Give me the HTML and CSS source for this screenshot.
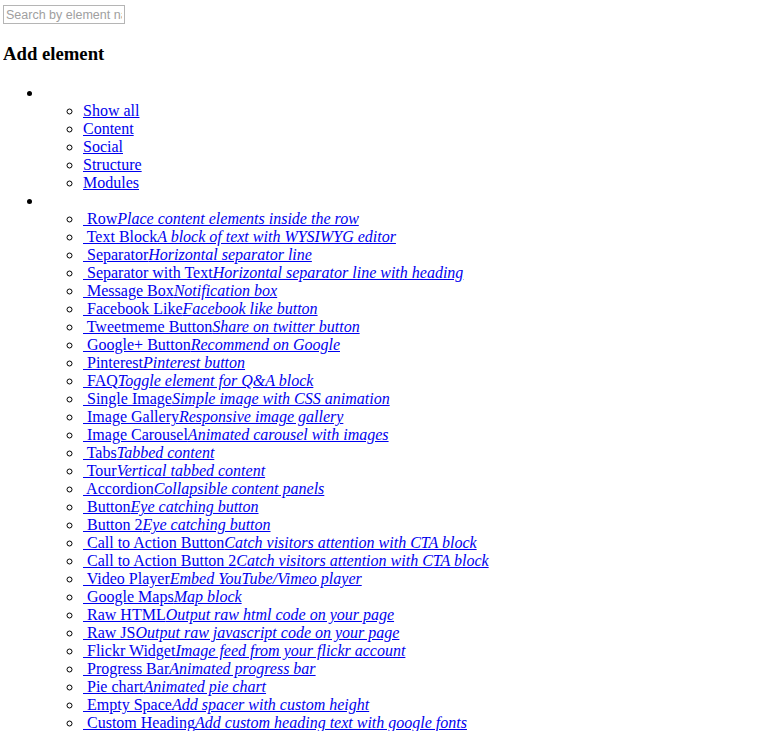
FILE: index.html
```html
<!DOCTYPE html>
<html lang="en">
<head>
    <meta charset="UTF-8">
    <title>Add element</title>
    <link rel="stylesheet" href="styles.css">
</head>
<body>

<input id="search" class="search" type="text" placeholder="Search by element name">

<h3>Add element</h3>

<ul class="panel">
    <li>
        <span class="tab-label">&nbsp;</span>
        <ul class="filters">
            <li><a href="#">Show all</a></li>
            <li><a href="#">Content</a></li>
            <li><a href="#">Social</a></li>
            <li><a href="#">Structure</a></li>
            <li><a href="#">Modules</a></li>
        </ul>
    </li>
    <li>
        <span class="tab-label">&nbsp;</span>
        <ul class="elements">
            <li><a href="#"><span class="icon"></span> Row<i>Place content elements inside the row</i></a></li>
            <li><a href="#"><span class="icon"></span> Text Block<i>A block of text with WYSIWYG editor</i></a></li>
            <li><a href="#"><span class="icon"></span> Separator<i>Horizontal separator line</i></a></li>
            <li><a href="#"><span class="icon"></span> Separator with Text<i>Horizontal separator line with heading</i></a></li>
            <li><a href="#"><span class="icon"></span> Message Box<i>Notification box</i></a></li>
            <li><a href="#"><span class="icon"></span> Facebook Like<i>Facebook like button</i></a></li>
            <li><a href="#"><span class="icon"></span> Tweetmeme Button<i>Share on twitter button</i></a></li>
            <li><a href="#"><span class="icon"></span> Google+ Button<i>Recommend on Google</i></a></li>
            <li><a href="#"><span class="icon"></span> Pinterest<i>Pinterest button</i></a></li>
            <li><a href="#"><span class="icon"></span> FAQ<i>Toggle element for Q&amp;A block</i></a></li>
            <li><a href="#"><span class="icon"></span> Single Image<i>Simple image with CSS animation</i></a></li>
            <li><a href="#"><span class="icon"></span> Image Gallery<i>Responsive image gallery</i></a></li>
            <li><a href="#"><span class="icon"></span> Image Carousel<i>Animated carousel with images</i></a></li>
            <li><a href="#"><span class="icon"></span> Tabs<i>Tabbed content</i></a></li>
            <li><a href="#"><span class="icon"></span> Tour<i>Vertical tabbed content</i></a></li>
            <li><a href="#"><span class="icon"></span> Accordion<i>Collapsible content panels</i></a></li>
            <li><a href="#"><span class="icon"></span> Button<i>Eye catching button</i></a></li>
            <li><a href="#"><span class="icon"></span> Button 2<i>Eye catching button</i></a></li>
            <li><a href="#"><span class="icon"></span> Call to Action Button<i>Catch visitors attention with CTA block</i></a></li>
            <li><a href="#"><span class="icon"></span> Call to Action Button 2<i>Catch visitors attention with CTA block</i></a></li>
            <li><a href="#"><span class="icon"></span> Video Player<i>Embed YouTube/Vimeo player</i></a></li>
            <li><a href="#"><span class="icon"></span> Google Maps<i>Map block</i></a></li>
            <li><a href="#"><span class="icon"></span> Raw HTML<i>Output raw html code on your page</i></a></li>
            <li><a href="#"><span class="icon"></span> Raw JS<i>Output raw javascript code on your page</i></a></li>
            <li><a href="#"><span class="icon"></span> Flickr Widget<i>Image feed from your flickr account</i></a></li>
            <li><a href="#"><span class="icon"></span> Progress Bar<i>Animated progress bar</i></a></li>
            <li><a href="#"><span class="icon"></span> Pie chart<i>Animated pie chart</i></a></li>
            <li><a href="#"><span class="icon"></span> Empty Space<i>Add spacer with custom height</i></a></li>
            <li><a href="#"><span class="icon"></span> Custom Heading<i>Add custom heading text with google fonts</i></a></li>
        </ul>
    </li>
</ul>

</body>
</html>
```

FILE: styles.css
```css
body { font-family: "Liberation Serif", "Times New Roman", serif; font-size: 16px; margin: 5px 3px; }
.search { display: block; box-sizing: border-box; width: 122px; height: 19px; margin: 0; padding: 1px 2px; border: 1px solid #b5b5b5; font-family: "Liberation Sans", Arial, sans-serif; font-size: 12.5px; }
.search::placeholder { color: #a0a0a0; }
h3 { font-size: 18.72px; line-height: 21px; margin: 19px 0 20px; }
.panel { margin: 20px 0; padding-left: 40px; line-height: 18px; }
.panel ul { margin: 0; padding-left: 40px; }
a { color: #0000ee; }
.icon { display: inline-block; width: 0; }
```
